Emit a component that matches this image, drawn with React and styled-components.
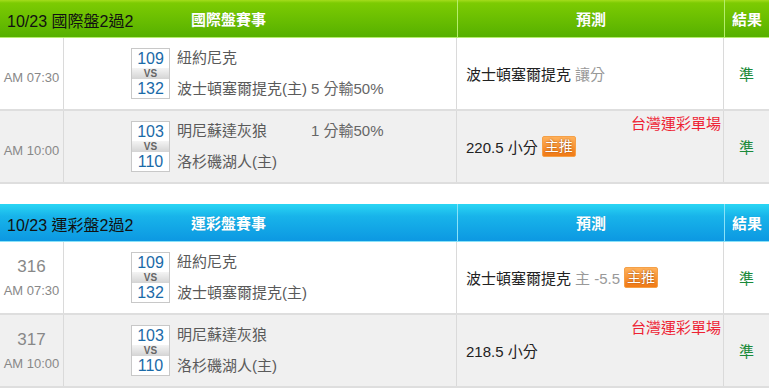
import React from 'react';
import styled, { createGlobalStyle, css } from 'styled-components';

const GlobalStyle = createGlobalStyle`
  body {
    margin: 0;
    background: #fff;
    font-family: "Liberation Sans", "Noto Sans CJK TC", sans-serif;
  }
`;

const themes = {
  green: {
    bg: 'linear-gradient(to bottom, #a4dc1c 0px, #7ccb02 3px, #56b000 100%)',
    line: '#b5ee6c',
  },
  blue: {
    bg: 'linear-gradient(to bottom, #2ad6f4 0px, #18b4ea 12px, #0c98e2 100%)',
    line: '#8ae2f8',
  },
};

const Page = styled.div`
  width: 769px;
  display: flex;
  flex-direction: column;
  gap: 20px;
`;

const Table = styled.div`
  display: flex;
  flex-direction: column;
`;

const Header = styled.div`
  display: grid;
  grid-template-columns: 457px 267px 1fr;
  height: 37px;
  background: ${(p) => themes[p.$tone].bg};
  border-bottom: 1px solid ${(p) => themes[p.$tone].line};
`;

const HeaderMain = styled.div`
  display: grid;
  grid-template-columns: 1fr auto 1fr;
  align-items: center;
`;

const HeaderTitle = styled.div`
  padding-left: 7px;
  padding-top: 2px;
  font-size: 16px;
  color: #111;
  white-space: nowrap;
`;

const HeaderCell = styled.div`
  display: flex;
  align-items: center;
  justify-content: center;
  color: #fff;
  font-size: 15px;
  font-weight: bold;
  text-shadow: 0 0 1px rgba(0, 0, 0, 0.15);
  ${(p) =>
    p.$divided &&
    css`
      border-left: 1px solid ${themes[p.$tone].line};
    `}
`;

const Row = styled.div`
  display: grid;
  grid-template-columns: 64px 393px 267px 1fr;
  height: 71px;
  border-bottom: 2px solid #dedede;
  background: ${(p) => (p.$alt ? '#f0f0f0' : '#fff')};
`;

const Cell = styled.div`
  display: flex;
  align-items: center;
  border-right: ${(p) => (p.$last ? 'none' : '1px solid #dadada')};
  position: relative;
`;

const TimeCell = styled(Cell)`
  flex-direction: column;
  justify-content: center;
  gap: 6px;
  color: #888;
`;

const Code = styled.div`
  font-size: 17px;
  line-height: 20px;
`;

const Time = styled.div`
  font-size: 13px;
  line-height: 16px;
  padding-top: ${(p) => (p.$solo ? '9px' : '0')};
`;

const MatchCell = styled(Cell)`
  padding-left: 67px;
  gap: 7px;
`;

const Numbers = styled.div`
  width: 39px;
  display: flex;
  flex-direction: column;
`;

const Num = styled.div`
  height: 19px;
  border: 1px solid #c8c8c8;
  ${(p) => (p.$top ? 'border-bottom: none;' : 'border-top: none;')}
  background: #fff;
  color: #1a6aa8;
  font-size: 16px;
  line-height: 20px;
  text-align: center;
`;

const Vs = styled.div`
  height: 11px;
  border-left: 1px solid #c8c8c8;
  border-right: 1px solid #c8c8c8;
  background: linear-gradient(to bottom, #f4f4f4, #d4d4d4);
  color: #666;
  font-size: 10px;
  font-weight: bold;
  line-height: 11px;
  text-align: center;
`;

const Names = styled.div`
  height: 51px;
  display: flex;
  flex-direction: column;
  justify-content: space-between;
`;

const NameLine = styled.div`
  display: flex;
  font-size: 15px;
  line-height: 20px;
  color: #5a5a5a;
  white-space: nowrap;
`;

const Name = styled.span`
  width: 134px;
`;

const Handicap = styled.span`
  color: #666;
`;

const PredictCell = styled(Cell)`
  padding-left: 9px;
  font-size: 15px;
  color: #222;
  white-space: nowrap;
`;

const Muted = styled.span`
  color: #999;
  margin-left: 4px;
`;

const Badge = styled.span`
  margin-left: 4px;
  padding: 0 2px;
  height: 19px;
  line-height: 19px;
  font-size: 14px;
  color: #fff;
  border: 1px solid #f4a048;
  border-radius: 2px;
  background: linear-gradient(to bottom, #ffb15a, #f27a14);
  text-shadow: 0 0 2px #8a3a00;
`;

const Tag = styled.span`
  position: absolute;
  top: 3px;
  right: 2px;
  font-size: 15px;
  line-height: 20px;
  color: #ee2233;
`;

const ResultCell = styled(Cell)`
  justify-content: center;
  font-size: 15px;
  color: #1a8a3a;
`;

const tables = [
  {
    tone: 'green',
    title: '10/23 國際盤2過2',
    label: '國際盤賽事',
    rows: [
      {
        time: 'AM 07:30',
        home: ['109', '紐約尼克', ''],
        away: ['132', '波士頓塞爾提克(主)', '5 分輸50%'],
        pick: '波士頓塞爾提克',
        note: '讓分',
      },
      {
        time: 'AM 10:00',
        home: ['103', '明尼蘇達灰狼', '1 分輸50%'],
        away: ['110', '洛杉磯湖人(主)', ''],
        pick: '220.5 小分',
        badge: true,
        tag: true,
      },
    ],
  },
  {
    tone: 'blue',
    title: '10/23 運彩盤2過2',
    label: '運彩盤賽事',
    rows: [
      {
        code: '316',
        time: 'AM 07:30',
        home: ['109', '紐約尼克', ''],
        away: ['132', '波士頓塞爾提克(主)', ''],
        pick: '波士頓塞爾提克',
        note: '主 -5.5',
        badge: true,
      },
      {
        code: '317',
        time: 'AM 10:00',
        home: ['103', '明尼蘇達灰狼', ''],
        away: ['110', '洛杉磯湖人(主)', ''],
        pick: '218.5 小分',
        tag: true,
      },
    ],
  },
];

const GameRow = ({ row, alt }) => (
  <Row $alt={alt}>
    <TimeCell>
      {row.code && <Code>{row.code}</Code>}
      <Time $solo={!row.code}>{row.time}</Time>
    </TimeCell>
    <MatchCell>
      <Numbers>
        <Num $top>{row.home[0]}</Num>
        <Vs>VS</Vs>
        <Num>{row.away[0]}</Num>
      </Numbers>
      <Names>
        {[row.home, row.away].map((t) => (
          <NameLine key={t[0]}>
            <Name>{t[1]}</Name>
            {t[2] && <Handicap>{t[2]}</Handicap>}
          </NameLine>
        ))}
      </Names>
    </MatchCell>
    <PredictCell>
      {row.pick}
      {row.note && <Muted>{row.note}</Muted>}
      {row.badge && <Badge>主推</Badge>}
      {row.tag && <Tag>台灣運彩單場</Tag>}
    </PredictCell>
    <ResultCell $last>準</ResultCell>
  </Row>
);

const App = () => (
  <>
    <GlobalStyle />
    <Page>
      {tables.map((t) => (
        <Table key={t.title}>
          <Header $tone={t.tone}>
            <HeaderMain>
              <HeaderTitle>{t.title}</HeaderTitle>
              <HeaderCell>{t.label}</HeaderCell>
              <div />
            </HeaderMain>
            <HeaderCell $divided $tone={t.tone}>預測</HeaderCell>
            <HeaderCell $divided $tone={t.tone}>結果</HeaderCell>
          </Header>
          {t.rows.map((r, i) => (
            <GameRow key={r.home[0]} row={r} alt={i % 2 === 1} />
          ))}
        </Table>
      ))}
    </Page>
  </>
);

export default App;
